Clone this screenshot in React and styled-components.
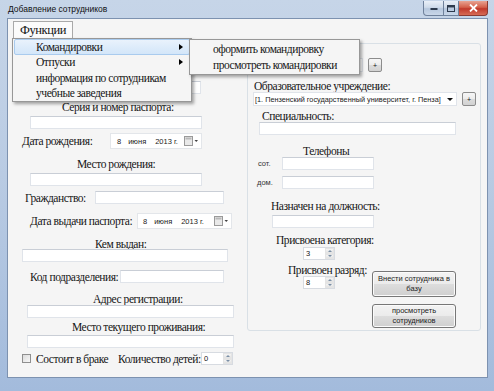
import React from 'react';
import styled, { createGlobalStyle } from 'styled-components';

const GlobalStyle = createGlobalStyle`
  html, body {
    margin: 0;
    padding: 0;
    background: #ffffff;
  }
  body {
    width: 494px;
    height: 391px;
    overflow: hidden;
  }
`;

const sans = '"Liberation Sans", Arial, sans-serif';

const Window = styled.div`
  width: 494px;
  height: 391px;
  box-sizing: border-box;
  display: flex;
  flex-direction: column;
  background: linear-gradient(180deg, #c6d5e8 0%, #b9cbe3 45%, #a3bbdc 100%);
  font-family: "Liberation Serif", "Times New Roman", serif;
  color: #151515;
`;

const TitleBar = styled.div`
  height: 18px;
  flex-shrink: 0;
  display: flex;
  justify-content: space-between;
  padding-left: 8px;
`;

const Title = styled.div`
  font-family: ${sans};
  font-size: 8.5px;
  line-height: 19px;
  color: #101010;
`;

const Caption = styled.div`
  display: flex;
  margin: 1px 6px 0 0;
  height: 15px;
`;

const CaptionButton = styled.div`
  width: ${p => p.$w}px;
  height: 15px;
  box-sizing: border-box;
  display: flex;
  align-items: center;
  justify-content: center;
  border: 1px solid ${p => (p.$close ? '#8a3a32' : '#6f819b')};
  border-top: none;
  border-left: ${p => (p.$first ? '1px solid #6f819b' : 'none')};
  border-radius: ${p => (p.$first ? '0 0 0 4px' : p.$close ? '0 0 4px 0' : '0')};
  background: ${p =>
    p.$close
      ? 'linear-gradient(180deg, #e8a493 0%, #d4604a 45%, #c0392b 55%, #d66b55 100%)'
      : 'linear-gradient(180deg, #e9eff7 0%, #cfdbea 45%, #b6c7dd 55%, #c9d7e9 100%)'};
`;

const Client = styled.div`
  flex: 1;
  margin: 0 6px 13px 7px;
  border: 1px solid #7d92b0;
  background: #f5f5f5;
  display: flex;
  flex-direction: column;
  position: relative;
`;

const MenuBar = styled.div`
  height: 21px;
  flex-shrink: 0;
  display: flex;
  padding-left: 5px;
  position: relative;
  z-index: 5;
`;

const MenuHead = styled.div`
  position: relative;
  margin-top: 2px;
  height: 17px;
  box-sizing: border-box;
  padding: 0 6px;
  border: 1px solid #a9a9a9;
  border-bottom: none;
  background: #fbfbfb;
  font-size: 12.5px;
  letter-spacing: -0.4px;
  line-height: 16px;
`;

const Dropdown = styled.div`
  position: absolute;
  top: 100%;
  left: ${p => p.$left}px;
  width: ${p => p.$w}px;
  box-sizing: border-box;
  border: 1px solid #979797;
  background: #f5f5f5;
  padding: ${p => p.$pad || 0}px 0;
  box-shadow: 2px 2px 3px rgba(0, 0, 0, 0.35);
  font-size: 11.5px;
  letter-spacing: -0.45px;
`;

const SubMenu = styled(Dropdown)`
  top: -1px;
  left: 100%;
`;

const MenuItem = styled.div`
  position: relative;
  height: ${p => p.$h}px;
  box-sizing: border-box;
  display: flex;
  align-items: center;
  padding-left: 21px;
  margin: 0 1px;
  border: 1px solid ${p => (p.$active ? '#a9cbee' : 'transparent')};
  border-radius: 2px;
  background: ${p => (p.$active ? 'linear-gradient(180deg, #e9f2fc 0%, #d3e6f9 100%)' : 'transparent')};
  white-space: nowrap;
`;

const SubArrow = styled.span`
  position: absolute;
  right: 6px;
  top: 50%;
  margin-top: -3px;
  width: 0;
  height: 0;
  border-left: 4px solid #000;
  border-top: 3px solid transparent;
  border-bottom: 3px solid transparent;
`;

const Body = styled.div`
  display: flex;
  align-items: flex-start;
`;

const Column = styled.div`
  width: ${p => p.$w}px;
  flex-shrink: 0;
  display: flex;
  flex-direction: column;
  padding-top: ${p => p.$pt || 0}px;
  margin-top: ${p => p.$mt || 0}px;
`;

const GroupBox = styled.div`
  width: 234px;
  box-sizing: border-box;
  margin-top: 3px;
  padding-bottom: 2px;
  border: 1px solid #d9e0e6;
  border-radius: 3px;
  display: flex;
  flex-direction: column;
`;

const Split = styled.div`
  display: flex;
  align-items: flex-start;
`;

const Label = styled.div`
  flex-shrink: 0;
  margin-left: ${p => p.$ml || 0}px;
  margin-top: ${p => p.$mt || 0}px;
  width: ${p => (p.$w ? `${p.$w}px` : 'auto')};
  height: 12px;
  font-size: 11.5px;
  letter-spacing: -0.45px;
  line-height: 12px;
  white-space: nowrap;
`;

const SmallLabel = styled.div`
  flex-shrink: 0;
  width: ${p => p.$w}px;
  font-family: ${sans};
  font-size: 7.5px;
  color: #333;
`;

const Row = styled.div`
  display: flex;
  align-items: ${p => p.$align || 'center'};
  margin-left: ${p => p.$ml || 0}px;
  margin-top: ${p => p.$mt || 0}px;
`;

const TextBox = styled.div`
  flex-shrink: 0;
  box-sizing: border-box;
  width: ${p => p.$w}px;
  height: 13px;
  margin-left: ${p => p.$ml || 0}px;
  margin-top: ${p => p.$mt || 0}px;
  background: #ffffff;
  border: 1px solid #e0e4ea;
  border-top-color: #c9ced6;
`;

const Picker = styled.div`
  flex-shrink: 0;
  box-sizing: border-box;
  width: ${p => p.$w}px;
  height: 16px;
  display: flex;
  align-items: center;
  background: #ffffff;
  border: 1px solid #e3e6ea;
  font-family: ${sans};
  font-size: 7.5px;
  color: #222;
`;

const DatePart = styled.span`
  margin-left: ${p => p.$ml}px;
  white-space: nowrap;
`;

const Combo = styled.div`
  flex-shrink: 0;
  box-sizing: border-box;
  width: ${p => p.$w}px;
  height: 14px;
  margin-left: ${p => p.$ml || 0}px;
  padding-left: 1px;
  display: flex;
  align-items: center;
  justify-content: space-between;
  background: #ffffff;
  border: 1px solid #e0e4ea;
  font-family: ${sans};
  font-size: 7.3px;
  white-space: nowrap;
  color: #222;
`;

const ComboArrow = styled.span`
  margin-right: 3px;
  width: 0;
  height: 0;
  border-top: 3px solid #111;
  border-left: 3px solid transparent;
  border-right: 3px solid transparent;
`;

const PlusButton = styled.div`
  flex-shrink: 0;
  box-sizing: border-box;
  width: 14px;
  height: 14px;
  margin-left: ${p => p.$ml}px;
  display: flex;
  align-items: center;
  justify-content: center;
  border: 1px solid #8c8c8c;
  border-radius: 2px;
  background: linear-gradient(180deg, #f6f6f6 0%, #ececec 50%, #dcdcdc 51%, #d2d2d2 100%);
  font-family: ${sans};
  font-size: 7px;
  line-height: 7px;
`;

const Spinner = styled.div`
  flex-shrink: 0;
  box-sizing: border-box;
  width: 32px;
  height: 13px;
  margin-left: ${p => p.$ml || 0}px;
  margin-top: ${p => p.$mt || 0}px;
  display: flex;
  justify-content: space-between;
  background: #ffffff;
  border: 1px solid #d7dbe1;
  font-family: ${sans};
  font-size: 7.5px;
  line-height: 11px;
  letter-spacing: 0;
  padding-left: 2px;
`;

const SpinButtons = styled.div`
  width: 9px;
  display: flex;
  flex-direction: column;
`;

const SpinHalf = styled.div`
  flex: 1;
  display: flex;
  align-items: center;
  justify-content: center;
  background: linear-gradient(180deg, #f4f4f4, #e2e2e2);
  border: 1px solid #e4e4e4;
  box-sizing: border-box;
`;

const Tri = styled.span`
  width: 0;
  height: 0;
  border-left: 2px solid transparent;
  border-right: 2px solid transparent;
  ${p => (p.$up ? 'border-bottom: 2px solid #7b8fa6;' : 'border-top: 2px solid #7b8fa6;')}
`;

const Button = styled.div`
  box-sizing: border-box;
  width: 84px;
  height: ${p => p.$h}px;
  margin-top: ${p => p.$mt}px;
  display: flex;
  align-items: center;
  justify-content: center;
  text-align: center;
  padding: 0 4px;
  border: 1px solid #777777;
  border-radius: 3px;
  background: linear-gradient(180deg, #f3f3f3 0%, #ebebeb 50%, #dddddd 51%, #cfcfcf 100%);
  box-shadow: inset 0 0 0 1px #fbfbfb;
  font-family: ${sans};
  font-size: 7.5px;
  line-height: 10px;
  color: #222;
`;

const CheckBox = styled.div`
  flex-shrink: 0;
  box-sizing: border-box;
  width: 9px;
  height: 9px;
  border: 1px solid #8f8f8f;
  background: linear-gradient(135deg, #dcdcdc 0%, #f7f7f7 100%);
`;

const CalendarIcon = () => (
  <svg width="15" height="10" viewBox="0 0 15 10" style={{ marginLeft: 'auto', marginRight: 2 }}>
    <rect x="0.5" y="0.5" width="8" height="9" fill="#e9e9e9" stroke="#9a9a9a" />
    <rect x="1.5" y="1.5" width="6" height="2" fill="#b9b9b9" />
    <path d="M10.5 4 L14 4 L12.25 6 Z" fill="#444" />
  </svg>
);

const MinimizeGlyph = () => (
  <svg width="8" height="6" viewBox="0 0 8 6">
    <rect x="0.5" y="3" width="7" height="2" fill="#2d3a4d" />
  </svg>
);

const MaximizeGlyph = () => (
  <svg width="8" height="7" viewBox="0 0 8 7">
    <rect x="0.5" y="0.5" width="7" height="6" fill="none" stroke="#2d3a4d" />
    <rect x="1" y="1" width="6" height="1.5" fill="#2d3a4d" />
  </svg>
);

const CloseGlyph = () => (
  <svg width="9" height="8" viewBox="0 0 9 8">
    <path d="M1 0.5 L8 7.5 M8 0.5 L1 7.5" stroke="#ffffff" strokeWidth="1.8" />
  </svg>
);

const DateField = ({ w, offsets }) => (
  <Picker $w={w}>
    <DatePart $ml={offsets[0]}>8</DatePart>
    <DatePart $ml={offsets[1]}>июня</DatePart>
    <DatePart $ml={offsets[2]}>2013 г.</DatePart>
    <CalendarIcon />
  </Picker>
);

const NumberField = ({ value, ml, mt }) => (
  <Spinner $ml={ml} $mt={mt}>
    {value}
    <SpinButtons>
      <SpinHalf>
        <Tri $up />
      </SpinHalf>
      <SpinHalf>
        <Tri />
      </SpinHalf>
    </SpinButtons>
  </Spinner>
);

export default function App() {
  return (
    <>
      <GlobalStyle />
      <Window>
        <TitleBar>
          <Title>Добавление сотрудников</Title>
          <Caption>
            <CaptionButton $w={21} $first>
              <MinimizeGlyph />
            </CaptionButton>
            <CaptionButton $w={15}>
              <MaximizeGlyph />
            </CaptionButton>
            <CaptionButton $w={29} $close>
              <CloseGlyph />
            </CaptionButton>
          </Caption>
        </TitleBar>

        <Client>
          <MenuBar>
            <MenuHead>
              Функции
              <Dropdown $left={-2} $w={180}>
                <MenuItem $h={15.5} $active>
                  Командировки
                  <SubArrow />
                  <SubMenu $w={171} $pad={1}>
                    <MenuItem $h={16}>оформить командировку</MenuItem>
                    <MenuItem $h={16}>просмотреть командировки</MenuItem>
                  </SubMenu>
                </MenuItem>
                <MenuItem $h={15.5}>
                  Отпуски
                  <SubArrow />
                </MenuItem>
                <MenuItem $h={15.5}>информация по сотрудникам</MenuItem>
                <MenuItem $h={15.5}>учебные заведения</MenuItem>
              </Dropdown>
            </MenuHead>
          </MenuBar>

          <Body>
            <Column $w={239} $pt={34}>
              <TextBox $ml={22} $mt={7} $w={171} />
              <Label $ml={54} $mt={7}>Серия и номер паспорта:</Label>
              <TextBox $ml={22} $mt={3} $w={172} />
              <Row $ml={14} $mt={4}>
                <Label $w={88}>Дата рождения:</Label>
                <DateField w={92} offsets={[6, 7, 9]} />
              </Row>
              <Label $ml={69} $mt={9}>Место рождения:</Label>
              <TextBox $ml={22} $mt={3} $w={172} />
              <Row $ml={17} $mt={5} $align="flex-end">
                <Label $w={70}>Гражданство:</Label>
                <TextBox $w={129} />
              </Row>
              <Row $ml={22} $mt={9}>
                <Label $w={107}>Дата выдачи паспорта:</Label>
                <DateField w={95} offsets={[5, 7, 9]} />
              </Row>
              <Label $ml={87} $mt={9}>Кем выдан:</Label>
              <TextBox $ml={14} $mt={-1} $w={206} />
              <Row $ml={22} $mt={8} $align="flex-end">
                <Label $w={90}>Код подразделения:</Label>
                <TextBox $w={104} />
              </Row>
              <Label $ml={85} $mt={10}>Адрес регистрации:</Label>
              <TextBox $ml={19} $w={207} />
              <Label $ml={64} $mt={3}>Место текущего проживания:</Label>
              <TextBox $ml={19} $mt={2} $w={207} />
              <Row $ml={14} $mt={4}>
                <CheckBox />
                <Label $ml={5} $w={82}>Состоит в браке</Label>
                <Label $w={83}>Количество детей:</Label>
                <NumberField value="0" />
              </Row>
            </Column>

            <GroupBox>
              <Row $ml={5} $mt={14}>
                <Combo $w={110} />
                <PlusButton $ml={5}>+</PlusButton>
              </Row>
              <Label $ml={6} $mt={8}>Образовательное учреждение:</Label>
              <Row $ml={5}>
                <Combo $w={204}>
                  [1. Пензенский государственный университет, г. Пенза]
                  <ComboArrow />
                </Combo>
                <PlusButton $ml={5}>+</PlusButton>
              </Row>
              <Label $ml={14} $mt={4}>Специальность:</Label>
              <TextBox $ml={11} $w={197} />
              <Label $ml={55} $mt={10}>Телефоны</Label>
              <Row $ml={10}>
                <SmallLabel $w={24}>сот.</SmallLabel>
                <TextBox $w={92} />
              </Row>
              <Row $ml={9} $mt={6}>
                <SmallLabel $w={25}>дом.</SmallLabel>
                <TextBox $w={92} />
              </Row>
              <Split>
                <Column $w={124}>
                  <Label $ml={23} $mt={11}>Назначен на должность:</Label>
                  <TextBox $ml={24} $mt={3} $w={102} />
                  <Label $ml={28} $mt={6}>Присвоена категория:</Label>
                  <NumberField value="3" ml={55} mt={1} />
                  <Label $ml={40} $mt={4}>Присвоен разряд:</Label>
                  <NumberField value="8" ml={55} />
                </Column>
                <Column $w={84}>
                  <Button $mt={82} $h={26}>Внести сотрудника в базу</Button>
                  <Button $mt={7} $h={24}>просмотреть сотрудников</Button>
                </Column>
              </Split>
            </GroupBox>
          </Body>
        </Client>
      </Window>
    </>
  );
}
